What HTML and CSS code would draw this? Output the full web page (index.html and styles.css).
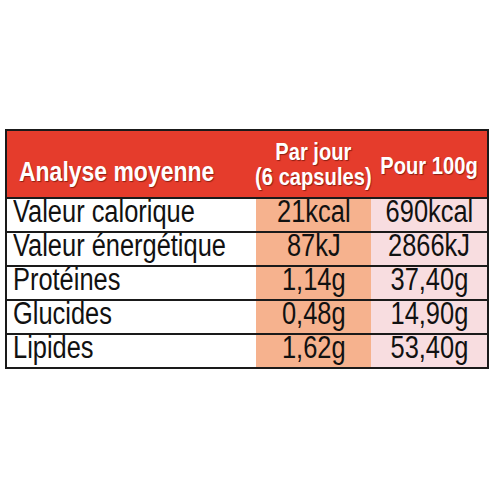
FILE: index.html
```html
<!DOCTYPE html>
<html lang="fr">
<head>
<meta charset="utf-8">
<link rel="stylesheet" href="styles.css">
</head>
<body>
<div class="page">
  <table class="nutri">
    <colgroup>
      <col class="c-label">
      <col class="c-day">
      <col class="c-hundred">
    </colgroup>
    <thead>
      <tr>
        <th class="h-label"><span class="n">Analyse moyenne</span></th>
        <th class="h-day"><div class="stack"><span class="n">Par jour</span><span class="n">(6 capsules)</span></div></th>
        <th class="h-hundred"><div class="stack"><span class="n">Pour 100g</span></div></th>
      </tr>
    </thead>
    <tbody>
      <tr><td class="label"><span class="n">Valeur calorique</span></td><td class="day"><span class="n">21kcal</span></td><td class="hundred"><span class="n">690kcal</span></td></tr>
      <tr><td class="label"><span class="n">Valeur énergétique</span></td><td class="day"><span class="n">87kJ</span></td><td class="hundred"><span class="n">2866kJ</span></td></tr>
      <tr><td class="label"><span class="n">Protéines</span></td><td class="day"><span class="n">1,14g</span></td><td class="hundred"><span class="n">37,40g</span></td></tr>
      <tr><td class="label"><span class="n">Glucides</span></td><td class="day"><span class="n">0,48g</span></td><td class="hundred"><span class="n">14,90g</span></td></tr>
      <tr><td class="label"><span class="n">Lipides</span></td><td class="day"><span class="n">1,62g</span></td><td class="hundred"><span class="n">53,40g</span></td></tr>
    </tbody>
  </table>
</div>
</body>
</html>
```
FILE: styles.css
```css
html, body {
  margin: 0;
  background: #ffffff;
}

.page {
  padding: 129px 0 0 5px;
  font-family: "Liberation Sans", Arial, sans-serif;
}

.nutri {
  width: 482px;
  border-collapse: collapse;
  table-layout: fixed;
  border: 2px solid #1a1a1a;
}

.c-label { width: 250px; }
.c-day { width: 115px; }
.c-hundred { width: 117px; }

.n {
  display: inline-block;
  white-space: nowrap;
  transform: scaleX(0.82);
}

.nutri thead tr {
  background: #e53c2c;
  height: 68px;
}

.nutri th {
  color: #ffffff;
  font-weight: bold;
  text-shadow: 1px 1px 1px rgba(110, 20, 10, 0.75);
  padding: 0;
  white-space: nowrap;
}

.h-label {
  text-align: left;
  vertical-align: bottom;
  font-size: 28px;
  line-height: 28px;
}

.nutri th.h-label {
  padding: 0 0 11px 12px;
}

.h-label .n {
  transform-origin: left center;
}

.stack {
  display: flex;
  flex-direction: column;
  align-items: center;
  justify-content: center;
}

.h-day,
.h-hundred {
  vertical-align: middle;
  font-size: 24px;
  line-height: 25px;
}

.h-day .n,
.h-hundred .n {
  transform: scaleX(0.84);
  transform-origin: center center;
}

.nutri th.h-day {
  padding-top: 0;
}

.nutri th.h-hundred {
  padding-top: 2px;
}

.nutri tbody tr {
  height: 33px;
  border-top: 2px solid #1a1a1a;
}

.nutri td {
  font-size: 31px;
  line-height: 26px;
  color: #111111;
  padding: 0 0 6px;
  vertical-align: middle;
  white-space: nowrap;
}

.nutri td.label {
  text-align: left;
  padding-left: 6px;
  background: #ffffff;
}

.nutri td.label .n {
  transform-origin: left center;
}

.nutri td.day {
  text-align: center;
  background: #f6b28e;
}

.nutri td.hundred {
  text-align: center;
  background: #f8dde0;
}

.nutri td.day .n,
.nutri td.hundred .n {
  transform-origin: center center;
}
```
